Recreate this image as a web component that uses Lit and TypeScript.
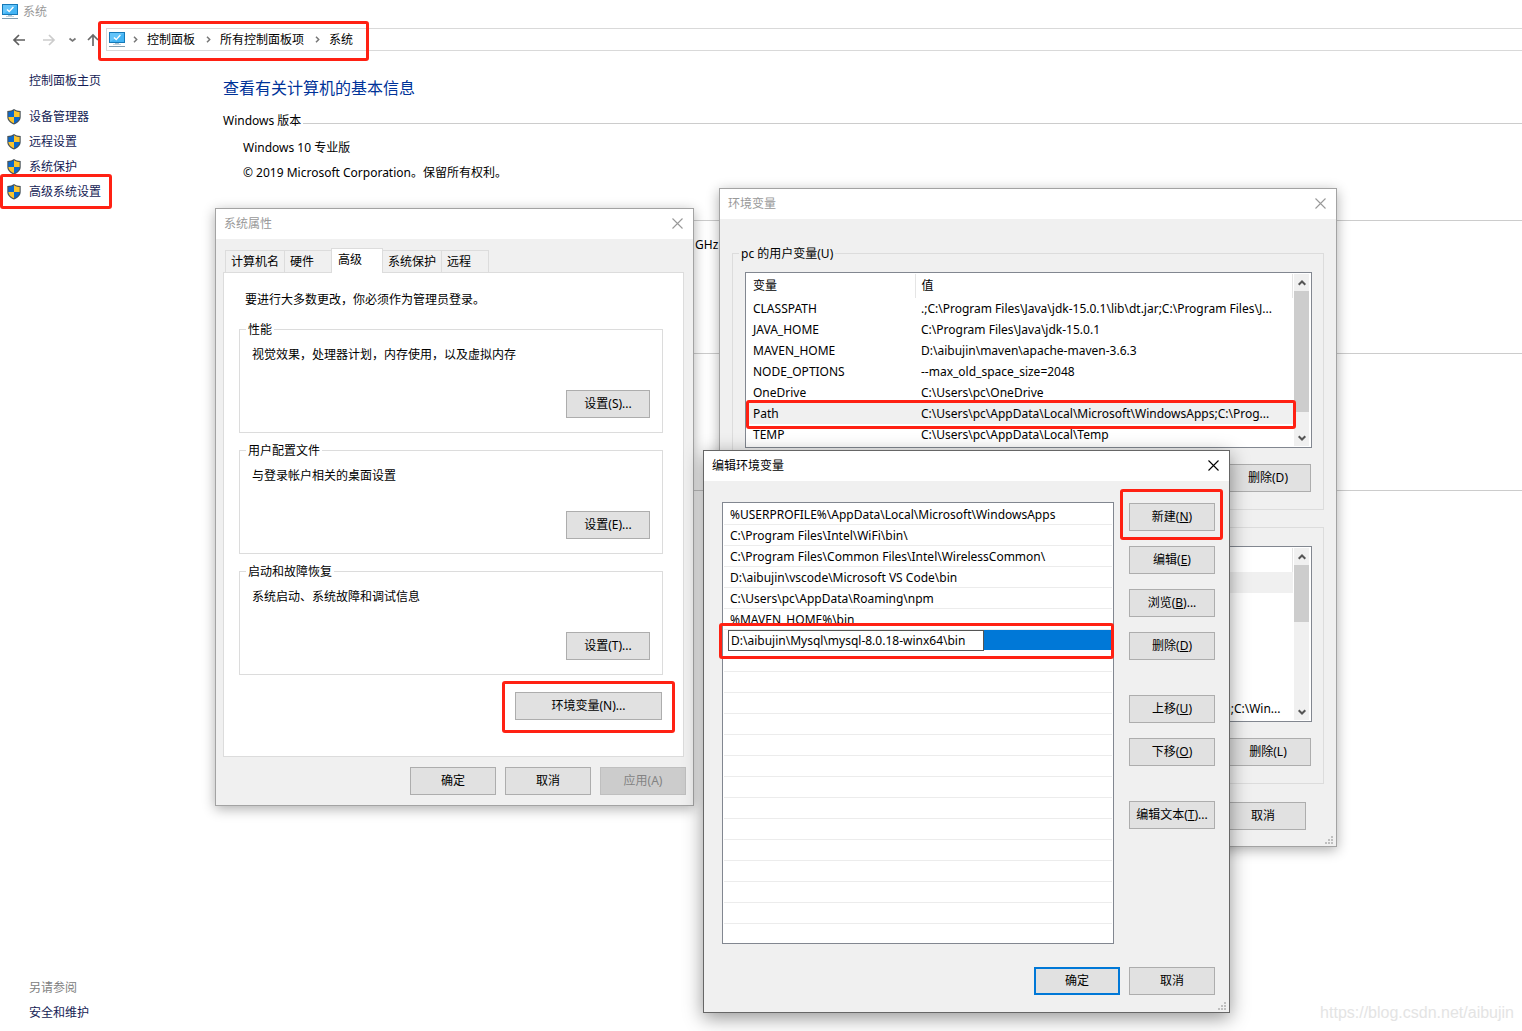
import { LitElement, html, css, svg, nothing } from "lit";
import { customElement, state } from "lit/decorators.js";
import { classMap } from "lit/directives/class-map.js";

const monitorIcon = html`<svg class="monitor" viewBox="0 0 16 16" aria-hidden="true">
  <rect x="0" y="0" width="16" height="11" fill="#1579b8" />
  <rect x="1" y="1" width="14" height="9" fill="#43b4f4" />
  <path d="M1 10V1h14z" fill="#63c4fa" />
  <path d="M5 5.4l2.2 2.2L11.4 3" fill="none" stroke="#fff" stroke-width="1.4" />
  <rect x="6" y="11" width="4" height="1" fill="#a9c1ce" />
  <rect x="4" y="12" width="8" height="1" fill="#c3d3dc" />
  <rect x="0" y="14" width="16" height="1" fill="#7f9db0" />
</svg>`;

const shieldIcon = html`<svg class="shield" viewBox="0 0 14 16" aria-hidden="true">
  <path d="M7 0C5.400 1.300 3 2 .3 2V8c0 3.600 3 6 6.700 7.600C10.700 14 13.700 11.600 13.700 8V2C11 2 8.600 1.300 7 0z" fill="#4a545a" />
  <path d="M7 1.300C5.500 2.400 3.700 3 1.400 3.100V8H7z" fill="#0a68cc" />
  <path d="M7 1.300c1.500 1.100 3.300 1.700 5.600 1.800V8H7z" fill="#fcc52c" />
  <path d="M1.400 8c.1 2.900 2.600 4.900 5.600 6.300V8z" fill="#fcc52c" />
  <path d="M12.600 8c-.1 2.900-2.600 4.900-5.600 6.300V8z" fill="#0a68cc" />
</svg>`;

const closeIcon = html`<svg class="x" viewBox="0 0 11 11" aria-hidden="true">
  <path d="M.5.5l10 10M10.500.5l-10 10" fill="none" stroke="currentColor" stroke-width="1.1" />
</svg>`;

const chevron = html`<svg class="chev" viewBox="0 0 5 7" aria-hidden="true">
  <path d="M1 .8L3.700 3.500 1 6.200" fill="none" stroke="#777" stroke-width="1.500" />
</svg>`;

const gripIcon = html`<svg class="grip" viewBox="0 0 8 8" aria-hidden="true">
  ${[[6, 0], [3, 3], [6, 3], [0, 6], [3, 6], [6, 6]].map(
    ([x, y]) => svg`<rect x=${x} y=${y} width="2" height="2" fill="#bfbfbf" />`
  )}
</svg>`;

const navArrow = (d: string, color: string, label: string, cls: string) => html`
  <button class="nav ${cls}" aria-label=${label}>
    <svg viewBox="0 0 14 14" aria-hidden="true">
      <path d=${d} fill="none" stroke=${color} stroke-width="1.700" />
    </svg>
  </button>`;

const userVars: [string, string][] = [
  ["CLASSPATH", ".;C:\\Program Files\\Java\\jdk-15.0.1\\lib\\dt.jar;C:\\Program Files\\J..."],
  ["JAVA_HOME", "C:\\Program Files\\Java\\jdk-15.0.1"],
  ["MAVEN_HOME", "D:\\aibujin\\maven\\apache-maven-3.6.3"],
  ["NODE_OPTIONS", "--max_old_space_size=2048"],
  ["OneDrive", "C:\\Users\\pc\\OneDrive"],
  ["Path", "C:\\Users\\pc\\AppData\\Local\\Microsoft\\WindowsApps;C:\\Prog..."],
  ["TEMP", "C:\\Users\\pc\\AppData\\Local\\Temp"],
];

const pathEntries = [
  "%USERPROFILE%\\AppData\\Local\\Microsoft\\WindowsApps",
  "C:\\Program Files\\Intel\\WiFi\\bin\\",
  "C:\\Program Files\\Common Files\\Intel\\WirelessCommon\\",
  "D:\\aibujin\\vscode\\Microsoft VS Code\\bin",
  "C:\\Users\\pc\\AppData\\Roaming\\npm",
  "%MAVEN_HOME%\\bin",
];

const settingGroups = [
  { title: "性能", text: "视觉效果，处理器计划，内存使用，以及虚拟内存", key: "S" },
  { title: "用户配置文件", text: "与登录帐户相关的桌面设置", key: "E" },
  { title: "启动和故障恢复", text: "系统启动、系统故障和调试信息", key: "T" },
];

const tabs = [
  { label: "计算机名", size: "wide" },
  { label: "硬件", size: "narrow" },
  { label: "高级", size: "medium" },
  { label: "系统保护", size: "wide" },
  { label: "远程", size: "narrow" },
];

const base = css`
  *, *::before, *::after { box-sizing: border-box; }
  button, input { font: inherit; color: inherit; margin: 0; padding: 0; border: 0; background: none; }
  a { text-decoration: none; color: inherit; }
  .btn {
    height: 28px; width: 86px; flex: none; white-space: nowrap;
    background: #e1e1e1; border: 1px solid #adadad; color: #000;
  }
  .btn.w84 { width: 84px; }
  .btn.w147 { width: 147px; }
  .btn.primary { border: 2px solid #0078d7; }
  .btn:disabled { background: #cccccc; border-color: #bfbfbf; color: #838383; }
  fieldset { margin: 0; min-width: 0; border: 1px solid #dcdcdc; padding: 0 12px; }
  legend { margin-left: -6px; padding: 1px 2px 0; line-height: 16px; height: 16px; }
`;

@customElement("dialog-frame")
export class DialogFrame extends LitElement {
  static properties = { heading: {}, active: { type: Boolean }, sizable: { type: Boolean } };
  declare heading: string;
  declare active: boolean;
  declare sizable: boolean;

  static styles = [
    base,
    css`
      :host {
        display: block; box-sizing: border-box; background: #f0f0f0; border: 1px solid #a3a3a3;
        box-shadow: 0 3px 12px rgba(0, 0, 0, 0.32);
      }
      :host([active]) { border-color: #666; box-shadow: 0 5px 18px rgba(0, 0, 0, 0.42); }
      header {
        display: flex; align-items: center; justify-content: space-between;
        height: 30px; padding: 0 10px 0 8px; background: #fff; color: #999;
      }
      header.on { color: #000; }
      h2 { margin: 0; font-size: 12px; font-weight: 400; line-height: 16px; }
      button { display: flex; padding-bottom: 2px; }
      .x { width: 11px; height: 11px; }
      .grip { position: absolute; right: 3px; bottom: 2px; width: 8px; height: 8px; }
    `,
  ];

  render() {
    return html`
      <header class=${classMap({ on: this.active })}>
        <h2>${this.heading}</h2>
        <button aria-label="关闭">${closeIcon}</button>
      </header>
      <slot></slot>
      ${this.sizable ? gripIcon : nothing}
    `;
  }
}

@customElement("list-scrollbar")
export class ListScrollbar extends LitElement {
  static properties = { ratio: { type: Number } };
  declare ratio: number;

  static styles = [
    base,
    css`
      :host { display: flex; flex-direction: column; flex: none; width: 15px; margin-right: 1px; background: #f0f0f0; }
      button { display: flex; align-items: center; justify-content: center; height: 17px; flex: none; }
      svg { width: 8px; height: 6px; }
      .track { flex: 1; }
      .thumb { background: #cdcdcd; }
    `,
  ];

  render() {
    return html`
      <button aria-label="向上滚动"><svg viewBox="0 0 8 6"><path d="M.7 4.800L4 1.500l3.300 3.300" fill="none" stroke="#555" stroke-width="2" /></svg></button>
      <div class="track"><div class="thumb" style="height:${this.ratio}%"></div></div>
      <button aria-label="向下滚动"><svg viewBox="0 0 8 6"><path d="M.7 1.200L4 4.500l3.300-3.300" fill="none" stroke="#555" stroke-width="2" /></svg></button>
    `;
  }
}

@customElement("app-root")
export class AppRoot extends LitElement {
  @state() private entry = "D:\\aibujin\\Mysql\\mysql-8.0.18-winx64\\bin";
  @state() private tab = 2;

  static styles = [
    base,
    css`
      :host {
        display: block; position: relative; min-height: 100vh; overflow: hidden;
        background: #fff; color: #000;
        font: 12px/16px "Noto Sans", "Noto Sans CJK SC", sans-serif;
      }
      .window { display: flex; flex-direction: column; min-height: 100vh; }
      .caption { display: flex; align-items: center; gap: 5px; height: 24px; padding-left: 2px; color: #999; }
      .monitor { width: 16px; height: 16px; flex: none; }
      .toolbar { display: flex; align-items: center; height: 31px; padding-left: 12px; }
      .nav { display: flex; width: 14px; height: 14px; flex: none; }
      .nav svg { width: 14px; height: 14px; }
      .forward { margin-left: 16px; }
      .recent { margin-left: 9px; }
      .up { margin-left: 7px; }
      .address {
        display: flex; align-items: center; flex: 1; height: 23px; margin-left: 6px;
        padding-left: 2px; border: 1px solid #d9d9d9; border-right: 0;
      }
      .address .chev { width: 5px; height: 7px; margin: 0 9px 0 8px; flex: none; }
      .address a { padding-right: 3px; }
      .columns { display: flex; flex: 1; }
      .side { display: flex; flex-direction: column; width: 223px; flex: none; padding: 13px 0 6px 7px; color: #151c55; line-height: 25px; }
      .side a { display: flex; align-items: center; gap: 8px; height: 25px; }
      .side .plain, .see { padding-left: 22px; }
      .side .home { margin-bottom: 11px; }
      .shield { width: 14px; height: 16px; }
      .see { margin-top: auto; color: #808080; }
      .info { flex: 1; padding-top: 21px; min-width: 0; }
      h1 { margin: 0 0 12px; font-size: 16px; line-height: 24px; font-weight: 400; color: #003399; }
      .sect { display: flex; align-items: flex-end; gap: 2px; margin: 0 0 6px; font-size: 12px; font-weight: 400; line-height: 17px; }
      .sect::after { content: ""; flex: 1; height: 1px; margin-bottom: 5px; background: #ccc; }
      .info p { margin: 0; padding-left: 20px; line-height: 25px; }
      .block { border-top: 1px solid #ccc; }
      .block.cpu { margin-top: 35px; height: 133px; padding-top: 11px; }
      .block.cpu p { padding-left: 472px; }
      .block.name { height: 137px; }

      .props { position: absolute; left: 215px; top: 208px; width: 479px; }
      .env { position: absolute; left: 719px; top: 188px; width: 618px; }
      .edit { position: absolute; left: 703px; top: 450px; width: 527px; }

      .props-body { padding: 9px 9px 10px 7px; }
      .tabs { display: flex; align-items: flex-end; padding-left: 2px; height: 24px; }
      .tab {
        height: 22px; margin-right: -1px; padding-left: 5px; text-align: left;
        border: 1px solid #dcdcdc; border-bottom: 0; white-space: nowrap;
      }
      .wide { width: 60px; }
      .narrow { width: 48px; }
      .medium { width: 52px; }
      .tab[aria-selected="true"] { position: relative; height: 25px; margin-bottom: -1px; padding: 0 0 3px 6px; background: #fff; }
      .panel { padding: 19px 20px 36px 15px; background: #fff; border: 1px solid #dcdcdc; }
      .panel .intro { margin: 0 0 13px; padding-left: 6px; }
      .groups { display: flex; flex-direction: column; gap: 9px; margin-bottom: 17px; }
      .groups fieldset { padding-bottom: 14px; }
      .groups p { margin: 10px 0 27px; }
      .row { display: flex; justify-content: flex-end; gap: 9px; }
      .panel > .row, .vars + .row { padding-right: 1px; }
      .props-foot { margin: 10px -2px 0 0; }

      .env-body { padding: 26px 12px 16px; }
      .env-body fieldset { padding: 11px 11px 17px 12px; }
      .env-body .last { margin: 17px 0 18px; padding-top: 18px; }
      .env-foot { padding-right: 18px; }
      .list { background: #fff; border: 1px solid #828790; }
      .vars { display: flex; gap: 1px; height: 176px; margin-bottom: 16px; padding: 1px; }
      .vars table { flex: 1; min-width: 0; border-collapse: collapse; table-layout: fixed; align-self: flex-start; }
      .vars th { width: 168px; height: 24px; border-right: 1px solid #e5e5e5; }
      .vars th.val { width: auto; }
      .vars th, .vars td { padding: 0 0 0 6px; font-weight: 400; text-align: left; white-space: nowrap; overflow: hidden; }
      .vars td { height: 21px; }
      .vars tr.sel td { background: #f0f0f0; }
      .vars td.end { padding-right: 12px; text-align: right; }

      .edit-body { display: flex; gap: 15px; padding: 21px 14px 23px 18px; }
      .paths { flex: 1; min-width: 0; min-height: 442px; margin: 0; padding: 1px; list-style: none; }
      .paths li { display: flex; align-items: center; height: 21px; padding: 2px 0 0 6px; border-bottom: 1px solid #ececec; white-space: nowrap; }
      .paths li.editing { align-items: stretch; padding: 0 0 0 4px; border-bottom-color: #fff; }
      .paths input { width: 256px; height: 21px; padding: 0 2px; border: 1px solid #555; background: #fff; outline: 0; }
      .fill { flex: 1; background: #0078d7; }
      .actions { display: flex; flex-direction: column; gap: 15px; padding-top: 1px; }
      .actions .split { margin-top: 20px; }
      .edit-foot { padding: 0 14px 17px; }

      .mark { position: absolute; border: 3px solid #ff2113; border-radius: 3px; pointer-events: none; }
      .m-address { left: 98px; top: 21px; width: 271px; height: 40px; }
      .m-advanced { left: 0; top: 174px; width: 112px; height: 35px; }
      .m-envbtn { left: 502px; top: 681px; width: 173px; height: 52px; }
      .m-path { left: 746px; top: 400px; width: 550px; height: 29px; }
      .m-entry { left: 719px; top: 623px; width: 395px; height: 36px; }
      .m-new { left: 1120px; top: 489px; width: 103px; height: 51px; }
      .credit {
        position: absolute; right: 8px; bottom: 8px; color: #e4e4e4;
        font: 16px/20px "Liberation Sans", Arial, sans-serif;
      }
    `,
  ];

  private key(label: string, k: string, tail = "") {
    return html`<button class="btn">${label}(<u>${k}</u>)${tail}</button>`;
  }

  private renderMain() {
    return html`
      <div class="window">
        <div class="caption">${monitorIcon}<span>系统</span></div>
        <nav class="toolbar">
          ${navArrow("M13 7H2M7 2L2 7l5 5", "#5f5f5f", "后退", "back")}
          ${navArrow("M1 7h11M7 2l5 5-5 5", "#cccccc", "前进", "forward")}
          ${navArrow("M4.500 5.500L7.500 8l3-2.500", "#777777", "最近", "recent")}
          ${navArrow("M7 13V2M2 7l5-5 5 5", "#6a6a6a", "向上", "up")}
          <div class="address">
            ${monitorIcon}${chevron}<a href="#">控制面板</a>${chevron}<a href="#">所有控制面板项</a>${chevron}<a href="#">系统</a>
          </div>
        </nav>
        <div class="columns">
          <aside class="side">
            <a class="plain home" href="#">控制面板主页</a>
            ${["设备管理器", "远程设置", "系统保护", "高级系统设置"].map(
              (t) => html`<a href="#">${shieldIcon}${t}</a>`
            )}
            <span class="see">另请参阅</span>
            <a class="plain" href="#">安全和维护</a>
          </aside>
          <main class="info">
            <h1>查看有关计算机的基本信息</h1>
            <h2 class="sect">Windows 版本</h2>
            <p>Windows 10 专业版</p>
            <p>© 2019 Microsoft Corporation。保留所有权利。</p>
            <section class="block cpu"><p>GHz</p></section>
            <section class="block name"></section>
            <section class="block"></section>
          </main>
        </div>
      </div>
    `;
  }

  private renderProps() {
    return html`
      <dialog-frame class="props" heading="系统属性">
        <div class="props-body">
          <div class="tabs" role="tablist">
            ${tabs.map(
              (t, i) => html`<button
                class="tab ${t.size}"
                role="tab"
                aria-selected=${i === this.tab ? "true" : "false"}
                @click=${() => (this.tab = i)}
              >${t.label}</button>`
            )}
          </div>
          <div class="panel" role="tabpanel">
            <p class="intro">要进行大多数更改，你必须作为管理员登录。</p>
            <div class="groups">
              ${settingGroups.map(
                (g) => html`<fieldset>
                  <legend>${g.title}</legend>
                  <p>${g.text}</p>
                  <div class="row"><button class="btn w84">设置(${g.key})...</button></div>
                </fieldset>`
              )}
            </div>
            <div class="row"><button class="btn w147">环境变量(N)...</button></div>
          </div>
          <div class="row props-foot">
            <button class="btn">确定</button>
            <button class="btn">取消</button>
            <button class="btn" disabled>应用(A)</button>
          </div>
        </div>
      </dialog-frame>
    `;
  }

  private renderEnv() {
    return html`
      <dialog-frame class="env" heading="环境变量" sizable>
        <div class="env-body">
          <fieldset>
            <legend>pc 的用户变量(U)</legend>
            <div class="list vars">
              <table>
                <thead><tr><th>变量</th><th class="val">值</th></tr></thead>
                <tbody>
                  ${userVars.map(
                    ([n, v]) => html`<tr class=${classMap({ sel: n === "Path" })}><td>${n}</td><td>${v}</td></tr>`
                  )}
                </tbody>
              </table>
              <list-scrollbar .ratio=${88}></list-scrollbar>
            </div>
            <div class="row"><button class="btn">删除(D)</button></div>
          </fieldset>
          <fieldset class="last">
            <div class="list vars">
              <table>
                <thead><tr><th></th><th class="val"></th></tr></thead>
                <tbody>
                  ${["", "", "", "", "", "", "n;C:\\Win..."].map(
                    (v, i) => html`<tr class=${classMap({ sel: i === 0 })}><td></td><td class="end">${v}</td></tr>`
                  )}
                </tbody>
              </table>
              <list-scrollbar .ratio=${41}></list-scrollbar>
            </div>
            <div class="row"><button class="btn">删除(L)</button></div>
          </fieldset>
          <div class="row env-foot"><button class="btn">取消</button></div>
        </div>
      </dialog-frame>
    `;
  }

  private renderEdit() {
    return html`
      <dialog-frame class="edit" heading="编辑环境变量" active sizable>
        <div class="edit-body">
          <ul class="list paths">
            ${pathEntries.map((p) => html`<li>${p}</li>`)}
            <li class="editing">
              <input
                aria-label="路径"
                .value=${this.entry}
                @input=${(e: Event) => (this.entry = (e.target as HTMLInputElement).value)}
              /><span class="fill"></span>
            </li>
            ${Array.from({ length: 13 }, () => html`<li></li>`)}
          </ul>
          <div class="actions">
            ${this.key("新建", "N")}${this.key("编辑", "E")}${this.key("浏览", "B", "...")}${this.key("删除", "D")}
            <button class="btn split">上移(<u>U</u>)</button>
            ${this.key("下移", "O")}
            <button class="btn split">编辑文本(<u>T</u>)...</button>
          </div>
        </div>
        <div class="row edit-foot">
          <button class="btn primary">确定</button>
          <button class="btn">取消</button>
        </div>
      </dialog-frame>
    `;
  }

  render() {
    return html`
      ${this.renderMain()}${this.renderProps()}${this.renderEnv()}${this.renderEdit()}
      ${["address", "advanced", "envbtn", "path", "entry", "new"].map((m) => html`<div class="mark m-${m}"></div>`)}
      <span class="credit">https://blog.csdn.net/aibujin</span>
    `;
  }
}
